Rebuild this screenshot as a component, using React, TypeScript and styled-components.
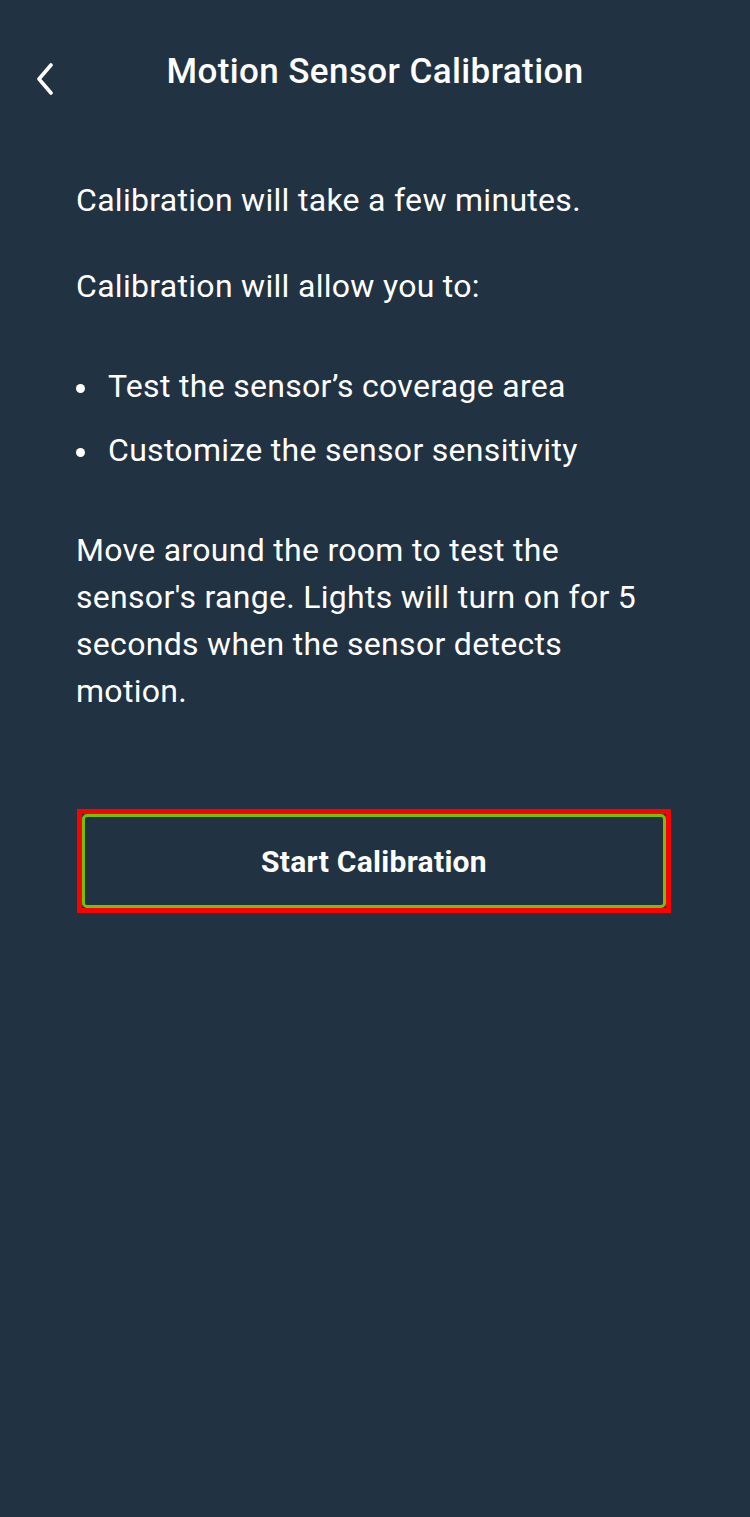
import styled, { createGlobalStyle } from "styled-components";

const GlobalStyle = createGlobalStyle`
  html, body {
    margin: 0;
    padding: 0;
    background: #213243;
  }
  body {
    font-family: Roboto, "Liberation Sans", sans-serif;
    color: #ffffff;
  }
`;

const Screen = styled.div`
  width: 750px;
  min-height: 1517px;
  background: #213243;
  display: flex;
  flex-direction: column;
`;

const Header = styled.header`
  height: 177px;
  display: grid;
  grid-template-columns: 90px 1fr 90px;
  align-items: start;
  padding-top: 48px;
  box-sizing: border-box;
`;

const BackButton = styled.button`
  background: none;
  border: none;
  padding: 0;
  margin: 14px 0 0 32px;
  width: 26px;
  height: 34px;
  display: flex;
  align-items: center;
  justify-content: center;
  cursor: pointer;
`;

const Title = styled.h1`
  margin: 0;
  text-align: center;
  font-size: 35px;
  font-weight: 500;
  letter-spacing: 0.4px;
  line-height: 48px;
`;

const Content = styled.main`
  padding: 0 76px;
  display: flex;
  flex-direction: column;
`;

const Text = styled.p<{ $gap?: number }>`
  margin: 0 0 ${(p) => p.$gap ?? 0}px;
  font-size: 32px;
  letter-spacing: 0.3px;
  line-height: 47px;
`;

const List = styled.ul`
  margin: 53px 0 53px;
  padding: 0;
  list-style: none;
  display: flex;
  flex-direction: column;
  gap: 17px;
`;

const Item = styled.li`
  font-size: 32px;
  letter-spacing: 0.3px;
  line-height: 47px;
  display: flex;
  align-items: center;

  &::before {
    content: "";
    flex: none;
    width: 9px;
    height: 9px;
    border-radius: 50%;
    background: #ffffff;
    margin: 4px 23px 0 0;
  }
`;

const Highlight = styled.div`
  margin: 94px 0 0 1px;
  width: 594px;
  border: 5px solid #ff0000;
  box-sizing: border-box;
`;

const PrimaryButton = styled.button`
  display: block;
  width: 100%;
  height: 94px;
  background: transparent;
  border: 3px solid #75c000;
  border-radius: 5px;
  color: #ffffff;
  font-family: Roboto, "Liberation Sans", sans-serif;
  font-size: 30px;
  letter-spacing: 0.3px;
  font-weight: 700;
  cursor: pointer;
`;

const ChevronLeft = () => (
  <svg width="20" height="32" viewBox="0 0 20 32" fill="none">
    <path
      d="M16 2 L4 16 L16 30"
      stroke="#ffffff"
      strokeWidth="3.6"
      strokeLinecap="round"
      strokeLinejoin="round"
    />
  </svg>
);

const App = () => {
  return (
    <Screen>
      <GlobalStyle />
      <Header>
        <BackButton aria-label="Back">
          <ChevronLeft />
        </BackButton>
        <Title>Motion Sensor Calibration</Title>
      </Header>
      <Content>
        <Text $gap={39}>Calibration will take a few minutes.</Text>
        <Text>Calibration will allow you to:</Text>
        <List>
          <Item>Test the sensor’s coverage area</Item>
          <Item>Customize the sensor sensitivity</Item>
        </List>
        <Text>
          Move around the room to test the sensor's range. Lights will turn on
          for 5 seconds when the sensor detects motion.
        </Text>
        <Highlight>
          <PrimaryButton>Start Calibration</PrimaryButton>
        </Highlight>
      </Content>
    </Screen>
  );
};

export default App;
